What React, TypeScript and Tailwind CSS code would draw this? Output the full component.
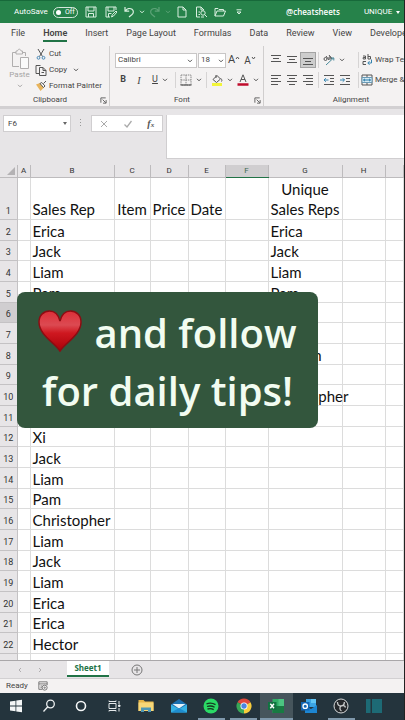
import { useState } from 'react';
import type { ReactNode } from 'react';

const menuTabs = ['File', 'Home', 'Insert', 'Page Layout', 'Formulas', 'Data', 'Review', 'View', 'Developer'];

const columns = [
  { name: 'A', width: 'w-[13px]' },
  { name: 'B', width: 'w-[84px]' },
  { name: 'C', width: 'w-9' },
  { name: 'D', width: 'w-[38px]' },
  { name: 'E', width: 'w-[37px]' },
  { name: 'F', width: 'w-[43px]' },
  { name: 'G', width: 'w-[74px]' },
  { name: 'H', width: 'w-[43px]' },
  { name: '', width: '' },
];

const salesReps = [
  'Erica', 'Jack', 'Liam', 'Pam', 'Hector', 'Erica', 'Morgan', 'Jack', 'Christopher', 'Pam', 'Xi',
  'Jack', 'Liam', 'Pam', 'Christopher', 'Liam', 'Jack', 'Liam', 'Erica', 'Erica', 'Hector', '',
];

const uniqueReps = ['Erica', 'Jack', 'Liam', 'Pam', 'Hector', 'Xi', 'Morgan', 'Tara', 'Christopher'];

function Chevron({ className = 'text-[#555]' }: { className?: string }) {
  return (
    <svg viewBox="0 0 6 4" className={`h-1 w-[6px] shrink-0 ${className}`} fill="none" stroke="currentColor">
      <path d="M1 .8 3 2.8 5 .8" />
    </svg>
  );
}

function Tool({ label, active, wide, children }: { label: string; active?: boolean; wide?: boolean; children: ReactNode }) {
  return (
    <button
      type="button"
      aria-label={label}
      className={`flex h-4 shrink-0 items-center justify-center ${wide ? 'w-[26px] gap-1' : 'w-4'} ${active ? 'border border-[#a3a3a3] bg-[#cdcdcd]' : ''}`}
    >
      {children}
    </button>
  );
}

function Divider() {
  return <span className="mx-[2px] h-4 w-px shrink-0 bg-[#d6d4d4]" />;
}

// text lines, given as [start, end, y]
function Lines({ rows }: { rows: number[][] }) {
  return (
    <svg viewBox="0 0 12 12" className="h-3 w-3" stroke="#555" strokeWidth="1">
      {rows.map(([x1, x2, y]) => (
        <path key={y} d={`M${x1} ${y}H${x2}`} />
      ))}
    </svg>
  );
}

function Launcher() {
  return (
    <svg viewBox="0 0 8 8" className="h-[7px] w-[7px]" fill="none" stroke="#555">
      <path d="M1 6.5V1h5.5M3 3l3.5 3.5M7 3.5V7H3.5" />
    </svg>
  );
}

function TitleBar() {
  const [autoSave, setAutoSave] = useState(false);
  return (
    <header className="flex h-[23px] shrink-0 items-center overflow-hidden border-t border-[#17693a] bg-[#26824a] pl-[14px] text-[8px] text-white">
      <label className="flex w-16 shrink-0 items-center justify-between">
        AutoSave
        <input type="checkbox" className="sr-only" checked={autoSave} onChange={(e) => setAutoSave(e.target.checked)} />
        <span className="flex h-[11px] w-[25px] items-center gap-1 rounded-full border border-white/80 pl-[2px] text-[7px] leading-none">
          <span className="h-[5px] w-[5px] rounded-full bg-white" />
          {autoSave ? 'On' : 'Off'}
        </span>
      </label>
      <button type="button" aria-label="Save" className="ml-[3px] flex w-5 shrink-0 justify-center">
        <svg viewBox="0 0 12 12" className="h-3 w-3" fill="none" stroke="#d9efe0">
          <path d="M1 1h10v10H1zM3 1v4h6V1M3.500 11V7.500h5V11" />
        </svg>
      </button>
      <button type="button" aria-label="Save as" className="flex w-5 shrink-0 justify-center">
        <svg viewBox="0 0 12 12" className="h-3 w-3" fill="none" stroke="#d9efe0">
          <path d="M5 11H1V1h10v3M3 1v4h6V1M3.500 11V7.500h3" />
          <path d="m6.500 11 .8-2.300L11 5l1 1-3.500 4z" />
        </svg>
      </button>
      <button type="button" aria-label="Undo" className="flex w-[26px] shrink-0 items-center justify-center gap-1">
        <svg viewBox="0 0 12 12" className="h-3 w-3" fill="none" stroke="#d9efe0" strokeWidth="1.200">
          <path d="M2 1v4.200h4.200M2.200 5C4 2.600 7 1.800 9 3.200c2 1.500 1.700 4-.2 5.500L6 11" />
        </svg>
        <Chevron className="text-[#d9efe0]" />
      </button>
      <button type="button" aria-label="Redo" className="flex w-[26px] shrink-0 items-center justify-center gap-1 opacity-30">
        <svg viewBox="0 0 12 12" className="h-3 w-3" fill="none" stroke="#d9efe0" strokeWidth="1.200">
          <path d="M10 1v4.200H5.800M9.800 5C8 2.600 5 1.800 3 3.200c-2 1.500-1.700 4 .2 5.500L6 11" />
        </svg>
        <Chevron className="text-[#d9efe0]" />
      </button>
      <button type="button" aria-label="New" className="flex w-[18px] shrink-0 justify-center">
        <svg viewBox="0 0 12 12" className="h-3 w-3" fill="none" stroke="#d9efe0">
          <path d="M2 1h5l3 3v7H2zM7 1v3h3" />
        </svg>
      </button>
      <button type="button" aria-label="Print preview" className="flex w-5 shrink-0 justify-center">
        <svg viewBox="0 0 12 12" className="h-3 w-3" fill="none" stroke="#d9efe0">
          <path d="M5 11H1.500V1H6l3 3M6 1v3h3M3.500 6H5M3.500 8.500H5" />
          <circle cx="8" cy="7" r="2.200" />
          <path d="M9.500 8.500 12 11M6 11h3" />
        </svg>
      </button>
      <button type="button" aria-label="Open" className="flex w-[18px] shrink-0 justify-center">
        <svg viewBox="0 0 12 12" className="h-3 w-3" fill="none" stroke="#d9efe0">
          <path d="M1 10V2.500h3l1 1h4.500V5M1 10l2-5h8.500l-2 5z" />
        </svg>
      </button>
      <button type="button" aria-label="Customize toolbar" className="flex w-5 shrink-0 justify-center">
        <svg viewBox="0 0 6 6" className="h-[6px] w-[6px]" fill="none" stroke="#d9efe0">
          <path d="M.5.8h5M1 3l2 2 2-2z" />
        </svg>
      </button>
      <span className="ml-[37px] shrink-0 font-['Open_Sans',sans-serif] font-semibold">@cheatsheets</span>
      <span className="ml-6 flex shrink-0 items-center gap-1">
        UNIQUE
        <svg viewBox="0 0 4 3" className="h-[3px] w-1" fill="white">
          <path d="M0 0h4L2 3z" />
        </svg>
      </span>
    </header>
  );
}

function Clipboard() {
  return (
    <section className="flex w-[110px] shrink-0 flex-col border-r border-[#d0cece]">
      <div className="flex h-[50px]">
        <button type="button" className="flex w-[35px] flex-col items-center pt-[2px] pl-1 text-[#a6a4a4]">
          <svg viewBox="0 0 20 22" className="h-[22px] w-5" fill="none" stroke="#b0aeae">
            <path d="M9 18.500H2.500v-14H6M12 4.500h3.500V8M6 6V3h1.500C8 .6 10.500.6 11 3h1.500v3z" />
            <path d="M10.500 9.500h8v11h-8z" fill="#fafafa" />
          </svg>
          <span className="leading-[10px]">Paste</span>
          <span className="pt-1"><Chevron className="text-[#a6a4a4]" /></span>
        </button>
        <div className="flex flex-col">
          <button type="button" className="flex h-4 items-center gap-[2px]">
            <svg viewBox="0 0 12 12" className="h-3 w-3" fill="none" stroke="#555">
              <path d="M3 1l4.500 7.500M9 1 4.500 8.500" />
              <g stroke="#4a8ab8"><circle cx="3.500" cy="9.800" r="1.400" /><circle cx="8.500" cy="9.800" r="1.400" /></g>
            </svg>
            Cut
          </button>
          <button type="button" className="flex h-4 items-center gap-[2px]">
            <svg viewBox="0 0 12 12" className="h-3 w-3" fill="none" stroke="#555">
              <path d="M4 9.500H1v-8h4.500" />
              <path d="M4.500 3.500H8l3 3v5H4.500zM8 3.500v3h3M6.500 8.500H9" />
            </svg>
            Copy
            <span className="ml-1"><Chevron /></span>
          </button>
          <button type="button" className="flex h-4 items-center gap-[2px] whitespace-nowrap">
            <svg viewBox="0 0 12 12" className="h-3 w-3">
              <path d="M1 4.500 5 3l4 4.500L5.500 11z" fill="#e8b45c" />
              <path d="M5 3.500 8.500 7.500 10 6 6.800 2.500zM8.500 3.500 11 1" fill="#fff" stroke="#555" />
            </svg>
            Format Painter
          </button>
        </div>
      </div>
      <div className="flex h-3 items-center pr-[2px]">
        <span className="flex-1 text-center">Clipboard</span>
        <Launcher />
      </div>
    </section>
  );
}

function FontGroup() {
  return (
    <section className="flex w-[154px] shrink-0 flex-col border-r border-[#d0cece]">
      <div className="flex h-[50px] flex-col gap-1 pt-[6px] pl-[5px]">
        <div className="flex items-center">
          <div className="relative">
            <select aria-label="Font" className="h-[15px] w-[82px] appearance-none border border-[#c8c6c6] bg-white pl-[2px] text-[8px] leading-none">
              <option>Calibri</option>
              <option>Arial</option>
            </select>
            <span className="pointer-events-none absolute top-[6px] right-1"><Chevron /></span>
          </div>
          <div className="relative ml-px">
            <select aria-label="Font size" className="h-[15px] w-7 appearance-none border border-[#c8c6c6] bg-white pl-[2px] text-[8px] leading-none">
              <option>18</option>
              <option>20</option>
            </select>
            <span className="pointer-events-none absolute top-[6px] right-[2px]"><Chevron /></span>
          </div>
          <Tool label="Increase font size">
            <span className="text-[11px]">A</span>
            <svg viewBox="0 0 5 8" className="h-2 w-[5px]" fill="none" stroke="#555"><path d="M1 3l1.500-2L4 3" /></svg>
          </Tool>
          <Tool label="Decrease font size">
            <span className="text-[10px]">A</span>
            <svg viewBox="0 0 5 8" className="h-2 w-[5px]" fill="none" stroke="#555"><path d="M1 1l1.500 2L4 1" /></svg>
          </Tool>
        </div>
        <div className="flex items-center">
          <Tool label="Bold"><b className="text-[9px]">B</b></Tool>
          <Tool label="Italic"><i className="font-['Liberation_Serif',serif] text-[10px]">I</i></Tool>
          <Tool label="Underline" wide><u className="text-[9px]">U</u><Chevron /></Tool>
          <Divider />
          <Tool label="Borders" wide>
            <svg viewBox="0 0 12 12" className="h-3 w-3" fill="none" stroke="#888">
              <path d="M1 1h10v10H1zM6 1v10M1 6h10" strokeDasharray="1.500 .8" />
              <path d="M.5 11h11" stroke="#444" />
            </svg>
            <Chevron />
          </Tool>
          <Divider />
          <Tool label="Fill color" wide>
            <svg viewBox="0 0 12 12" className="h-3 w-3" fill="none" stroke="#555">
              <path d="M2 5.500 6 1.500l3.500 3.500-4 3.500zM5 1v3M10 4.500c1.200 1.500 1 2.500.5 3" />
              <path d="M1 10.500h10" stroke="#f2f53a" strokeWidth="3" />
            </svg>
            <Chevron />
          </Tool>
          <Tool label="Font color" wide>
            <svg viewBox="0 0 12 12" className="h-3 w-3" fill="none" stroke="#555">
              <path d="M3 8 6 .8 9 8M4 5.500h4" />
              <path d="M.5 10.500h11" stroke="#c00c2c" strokeWidth="2.500" />
            </svg>
            <Chevron />
          </Tool>
        </div>
      </div>
      <div className="flex h-3 items-center pr-[2px]">
        <span className="flex-1 text-center">Font</span>
        <Launcher />
      </div>
    </section>
  );
}

function AlignmentGroup() {
  return (
    <section className="flex w-[174px] shrink-0 flex-col">
      <div className="flex h-[50px] flex-col gap-1 pt-[6px] pl-1">
        <div className="flex items-center">
          <Tool label="Top align"><Lines rows={[[1, 11, 1.5], [3, 9, 4.5], [1, 11, 7.5]]} /></Tool>
          <Tool label="Middle align"><Lines rows={[[1, 11, 2.5], [3, 9, 5.5], [1, 11, 8.5]]} /></Tool>
          <Tool label="Bottom align" active><Lines rows={[[1, 11, 4.5], [3, 9, 7.5], [1, 11, 10.5]]} /></Tool>
          <Divider />
          <Tool label="Orientation" wide>
            <svg viewBox="0 0 12 12" className="h-3 w-3" fill="none" stroke="#555">
              <circle cx="2.500" cy="5" r="1.500" /><path d="M3 2l3 4M6 1l3 4" /><circle cx="7" cy="4" r="1.200" />
              <path d="M3 11l7.500-7M8 4h2.800v2.500" stroke="#4a8a9a" />
            </svg>
            <Chevron />
          </Tool>
          <span className="ml-[9px] flex"><Divider /></span>
          <button type="button" className="flex items-center gap-[2px] whitespace-nowrap">
            <svg viewBox="0 0 12 12" className="h-3 w-3" fill="none" stroke="#555">
              <path d="M2 2h2.500v3H2.200V3.500h2.300M7 0v5h2.500V2.500H7M5 7.500H2v3h3" />
              <path d="M10.500 5.500v3.500H7M8.500 7.200 6.800 9l1.700 1.800" stroke="#3484b0" />
            </svg>
            Wrap Text
          </button>
        </div>
        <div className="flex items-center">
          <Tool label="Align left"><Lines rows={[[1, 11, 1.5], [1, 8, 4.5], [1, 11, 7.5], [1, 8, 10.5]]} /></Tool>
          <Tool label="Center"><Lines rows={[[1, 11, 1.5], [3, 9, 4.5], [1, 11, 7.5], [3, 9, 10.5]]} /></Tool>
          <Tool label="Align right"><Lines rows={[[1, 11, 1.5], [4, 11, 4.5], [1, 11, 7.5], [4, 11, 10.5]]} /></Tool>
          <Divider />
          <Tool label="Decrease indent">
            <svg viewBox="0 0 12 12" className="h-3 w-3" fill="none" stroke="#555">
              <path d="M1 1.500h10M7 4.500h4M7 7.500h4M1 10.500h10" /><path d="M5.500 6H1M2.800 4.200 1 6l1.800 1.800" stroke="#3484b0" />
            </svg>
          </Tool>
          <Tool label="Increase indent">
            <svg viewBox="0 0 12 12" className="h-3 w-3" fill="none" stroke="#555">
              <path d="M1 1.500h10M7 4.500h4M7 7.500h4M1 10.500h10" /><path d="M1 6h4.500M3.700 4.200 5.500 6 3.700 7.800" stroke="#3484b0" />
            </svg>
          </Tool>
          <span className="ml-[3px] flex"><Divider /></span>
          <button type="button" className="flex items-center gap-[2px] whitespace-nowrap">
            <svg viewBox="0 0 12 12" className="h-3 w-3" fill="none" stroke="#555">
              <path d="M1 1h10v10H1zM6 1v2M6 9v2" />
              <path d="M1 3.500h10v5H1z" fill="#d5ebf5" stroke="#6a9ab5" />
              <path d="M2.500 6h7M4 4.800 2.500 6 4 7.200M8 4.800 9.500 6 8 7.200" stroke="#2878a8" />
            </svg>
            Merge &amp; Center
          </button>
        </div>
      </div>
      <div className="flex h-3 items-center justify-center">Alignment</div>
    </section>
  );
}

function FormulaBar() {
  return (
    <div className="flex h-14 shrink-0 items-start bg-[#e7e5e7] pt-[6px] pl-[3px]">
      <div className="relative">
        <input aria-label="Name box" defaultValue="F6" className="h-[17px] w-[68px] border border-[#d0ced0] bg-white pl-1 text-[8px] text-[#444]" />
        <svg viewBox="0 0 4 3" className="pointer-events-none absolute top-[7px] right-1 h-[3px] w-1" fill="#666"><path d="M0 0h4L2 3z" /></svg>
      </div>
      <svg viewBox="0 0 2 8" className="mx-[9px] mt-1 h-2 w-[2px]" fill="#999"><path d="M0 0h1v1H0zM0 3h1v1H0zM0 6h1v1H0z" /></svg>
      <div className="flex h-[17px] w-[72px] shrink-0 items-center justify-around border border-[#d0ced0] bg-white">
        <button type="button" aria-label="Cancel">
          <svg viewBox="0 0 8 8" className="h-2 w-2" stroke="#aaa"><path d="M1 1l6 6M7 1 1 7" /></svg>
        </button>
        <button type="button" aria-label="Enter">
          <svg viewBox="0 0 8 8" className="h-2 w-2" fill="none" stroke="#aaa" strokeWidth="1.300"><path d="M.5 4.500 3 7l4.500-6" /></svg>
        </button>
        <button type="button" aria-label="Insert function" className="font-['Liberation_Serif',serif] text-[10px] leading-none font-bold text-[#555] italic">
          f<span className="text-[7px]">x</span>
        </button>
      </div>
      <textarea aria-label="Formula" className="ml-[3px] h-11 min-w-0 flex-1 resize-none border-b border-l border-[#d0ced0] bg-white" />
    </div>
  );
}

function RowNumber({ n }: { n: number }) {
  return (
    <th className={`border border-l-0 border-[#c4c2c4] p-0 text-center align-bottom font-['Roboto',sans-serif] text-[9px] leading-[15px] font-normal text-[#333] ${n === 6 ? 'bg-[#d0ced0]' : 'bg-[#e7e5e7]'}`}>
      {n}
    </th>
  );
}

function Sheet() {
  return (
    <table className="w-full table-fixed border-collapse font-['Lato','Open_Sans',sans-serif] text-[15px] leading-4 text-[#111]">
      <thead>
        <tr className="h-3 bg-[#e7e5e7] font-['Roboto',sans-serif] text-[8px] leading-[11px] text-[#333]">
          <th className="w-[17px] border-r border-b border-[#bdbbbd] p-0">
            <svg viewBox="0 0 8 8" className="ml-[7px] h-2 w-2" fill="#b4b2b4"><path d="M8 0v8H0z" /></svg>
          </th>
          {columns.map((col) => (
            <th
              key={col.name}
              className={`border-r border-b p-0 font-normal ${col.width} ${col.name === 'F' ? 'border-r-[#bdbbbd] border-b-[#217346] bg-[#d0ced0] text-[#3f6b52]' : 'border-[#bdbbbd]'}`}
            >
              {col.name}
            </th>
          ))}
        </tr>
      </thead>
      <tbody>
        <tr className="h-[42px] align-bottom leading-5">
          <RowNumber n={1} />
          <td className="border border-t-0 border-[#dcdcdc]" />
          <td className="border border-t-0 border-[#dcdcdc] p-0 pl-[2px]">Sales Rep</td>
          <td className="border border-t-0 border-[#dcdcdc] p-0 text-center">Item</td>
          <td className="border border-t-0 border-[#dcdcdc] p-0 text-center">Price</td>
          <td className="border border-t-0 border-[#dcdcdc] p-0 pl-[2px]">Date</td>
          <td className="border border-t-0 border-[#dcdcdc]" />
          <td className="border border-t-0 border-[#dcdcdc] p-0 text-center whitespace-nowrap">Unique<br />Sales Reps</td>
          <td className="border border-t-0 border-[#dcdcdc]" />
          <td className="border border-t-0 border-[#dcdcdc]" />
        </tr>
        {salesReps.map((rep, i) => (
          <tr key={i} className={i % 3 === 1 ? 'h-5' : 'h-[21px]'}>
            <RowNumber n={i + 2} />
            {columns.map((col) => (
              <td key={col.name} className="border border-[#dcdcdc] p-0 pt-[2px] pl-[2px] whitespace-nowrap">
                {col.name === 'B' && rep}
                {col.name === 'G' && uniqueReps[i]}
              </td>
            ))}
          </tr>
        ))}
      </tbody>
    </table>
  );
}

function Banner() {
  return (
    <div className="absolute top-[127px] left-[17px] w-[301px] rounded-lg bg-[#33563d] pt-3 pb-2 text-center font-['Open_Sans',sans-serif] text-[40px] leading-[58px] font-semibold whitespace-nowrap text-[#f2fcf1]">
      <p className="flex items-center justify-center gap-3">
        <svg viewBox="0 0 44 42" className="mb-1 h-[42px] w-11" aria-label="heart">
          <defs>
            <linearGradient id="heart" x1="0" y1="0" x2="0" y2="1">
              <stop offset="0" stopColor="#dd2f38" />
              <stop offset="0.350" stopColor="#dc4a52" />
              <stop offset="0.550" stopColor="#cf1820" />
              <stop offset="1" stopColor="#a80008" />
            </linearGradient>
          </defs>
          <path
            d="M22 41C17 33 1 25 1 12 1 5 6 1 11.500 1 17 1 20.500 5 22 11 23.500 5 27 1 32.500 1 38 1 43 5 43 12 43 25 27 33 22 41z"
            fill="url(#heart)"
            stroke="#8d0c12"
            strokeWidth="1.500"
          />
        </svg>
        and follow
      </p>
      <p>for daily tips!</p>
    </div>
  );
}

const taskbarApps: { name: string; open?: boolean; active?: boolean; icon: ReactNode }[] = [
  {
    name: 'Start',
    icon: <path d="M2 3.500 7.500 2.700V7.600H2zM8.300 2.600 14 1.800v5.800H8.300zM2 8.400h5.500v4.900L2 12.500zM8.300 8.400H14v5.800l-5.700-.8z" fill="#f4f6f7" />,
  },
  {
    name: 'Search',
    icon: <g fill="none" stroke="#eef1f2" strokeWidth="1.300"><circle cx="9.500" cy="6" r="3.800" /><path d="M6.800 8.800 2.500 13.500" /></g>,
  },
  { name: 'Cortana', icon: <circle cx="8" cy="8" r="4.500" fill="none" stroke="#f4f6f7" strokeWidth="1.600" /> },
  {
    name: 'Task view',
    icon: <g fill="none" stroke="#e3e7e9"><path d="M3 5.500h7v5H3zM3 2.500v1h7v-1M3 13.500v-1h7v1M13 3v3M13 10v3.500" /><path d="M12.500 7h1.500v1.500h-1.500z" fill="#fff" /></g>,
  },
  {
    name: 'File Explorer',
    icon: <><path d="M.5 2h5l1.500 1.500h8.500V13H.5z" fill="#e5b548" /><path d="M.5 4.500h15V13H.5z" fill="#f6d778" /><path d="M3 14V9.500h10V14h-3v-2H6v2z" fill="#4d97b5" /></>,
  },
  {
    name: 'Mail',
    icon: <><path d="M0 6.500 8 1l8 5.500V14H0z" fill="#1b6fae" /><path d="M1.500 6h13L8 10.500z" fill="#e7f3f9" /><path d="M0 6.500 8 11l8-4.500V14.500H0z" fill="#35b1e3" /><path d="M0 14.500 8 10l8 4.500z" fill="#1e8dd0" /></>,
  },
  {
    name: 'Spotify',
    open: true,
    icon: <><circle cx="8" cy="8" r="7.500" fill="#2bd965" /><path d="M3.500 5.800c3-1 6.500-.7 9 .8M4 8.500c2.600-.8 5.500-.5 7.600.7M4.500 11c2.200-.6 4.500-.4 6.200.6" fill="none" stroke="#14381f" strokeWidth="1.300" /></>,
  },
  {
    name: 'Chrome',
    open: true,
    icon: (
      <>
        <path d="M8 8 1.500 4.200A7.500 7.500 0 0 1 14.500 4.200z" fill="#e04a3c" />
        <path d="M8 8 1.500 4.200A7.500 7.500 0 0 0 8 15.500z" fill="#38a757" />
        <path d="M8 8l6.500-3.800A7.500 7.500 0 0 1 8 15.500z" fill="#f7cc3c" />
        <circle cx="8" cy="8" r="3.500" fill="#fff" /><circle cx="8" cy="8" r="2.700" fill="#4a86e0" />
      </>
    ),
  },
  {
    name: 'Excel',
    open: true,
    active: true,
    icon: <><path d="M4.500 1H16v14H4.500z" fill="#2fae66" /><path d="M4.500 8H16v7H4.500z" fill="#187a42" /><path d="M10.500 1H16v7h-5.500z" fill="#4cc481" /><path d="M0 4h8.500v8H0z" fill="#117340" /><path d="m2.300 5.800 3.700 4.400M6 5.800l-3.700 4.400" stroke="#fff" strokeWidth="1.400" /></>,
  },
  {
    name: 'Outlook',
    icon: <><path d="M5 1h10v8H5z" fill="#3ba4e4" /><path d="M10 1h5v4h-5z" fill="#62c6f5" /><path d="M4 8l6 3 6-4v8H4z" fill="#1d86d2" /><path d="M0 4h8.500v8.500H0z" fill="#1266b4" /><circle cx="4.200" cy="8.200" r="2.200" fill="none" stroke="#fff" strokeWidth="1.300" /></>,
  },
  {
    name: 'OBS',
    open: true,
    icon: <><circle cx="8" cy="8" r="7" fill="#25282b" stroke="#d8dadb" /><path d="M4.500 4C4.500 6.500 6 8 8 8c2-.2 3.500-1.500 3.300-4M8 8c-1.500 1.200-1.500 4 .5 5M8 8c1.500-1 4-.2 4.500 1.500" fill="none" stroke="#c9cccd" strokeWidth="1.300" /></>,
  },
  { name: 'Notes', icon: <path d="M0 1h4.500v14H0zM6 1h10v14H6z" fill="#1d6a75" /> },
];

function Taskbar() {
  return (
    <nav className="flex h-[27px] shrink-0 bg-[#24343d] pr-[14px]">
      {taskbarApps.map((app) => (
        <button
          key={app.name}
          type="button"
          aria-label={app.name}
          className={`flex flex-1 flex-col items-center justify-between pt-[5px] ${app.active ? 'bg-[#46555c]' : ''}`}
        >
          <svg viewBox="0 0 16 16" className="h-4 w-4">{app.icon}</svg>
          <span className={`h-[2px] ${app.active ? 'w-full' : 'w-[27px]'} ${app.open ? 'bg-[#7f98ab]' : ''}`} />
        </button>
      ))}
    </nav>
  );
}

export default function App() {
  const [tab, setTab] = useState('Home');

  return (
    <div className="flex h-screen flex-col overflow-hidden border-r border-[#222] bg-[#f4f2f2] font-['Roboto',sans-serif] text-[8px] text-[#444]">
      <TitleBar />
      <nav className="flex h-[23px] shrink-0 items-end gap-[18px] overflow-hidden pb-1 pl-[11px] text-[9px]">
        {menuTabs.map((name) => (
          <button
            key={name}
            type="button"
            onClick={() => setTab(name)}
            className={`h-4 shrink-0 border-b-2 leading-[14px] ${tab === name ? 'border-[#217346] font-semibold' : 'border-transparent'}`}
          >
            {name}
          </button>
        ))}
      </nav>
      <div className="flex h-[60px] shrink-0 overflow-hidden">
        <Clipboard />
        <FontGroup />
        <AlignmentGroup />
      </div>
      <div className="h-[3px] shrink-0 bg-[#d2d0d2]" />
      <FormulaBar />
      <main className="relative min-h-0 flex-1">
        <div className="h-full overflow-hidden bg-white">
          <Sheet />
        </div>
        <Banner />
      </main>
      <div className="flex h-[18px] shrink-0 items-start border-t border-[#a9a7a9] bg-[#e7e5e7]">
        <div className="flex w-[67px] items-center justify-center gap-4 pt-[6px] pr-2">
          <svg viewBox="0 0 4 6" className="h-[6px] w-1" fill="none" stroke="#b0aeb0"><path d="M3 1 1 3l2 2" /></svg>
          <svg viewBox="0 0 4 6" className="h-[6px] w-1" fill="none" stroke="#b0aeb0"><path d="m1 1 2 2-2 2" /></svg>
        </div>
        <button type="button" className="h-4 w-[42px] border-b-2 border-[#217346] bg-white font-['Open_Sans',sans-serif] font-bold text-[#217346]">Sheet1</button>
        <button type="button" aria-label="New sheet" className="ml-[22px] pt-[3px]">
          <svg viewBox="0 0 12 12" className="h-3 w-3" fill="none" stroke="#777"><circle cx="6" cy="6" r="5" /><path d="M6 3v6M3 6h6" /></svg>
        </button>
      </div>
      <footer className="flex h-[15px] shrink-0 items-center gap-[10px] border-t border-[#d2d0d2] pl-[6px]">
        Ready
        <svg viewBox="0 0 12 12" className="h-[10px] w-[10px]" fill="none" stroke="#666">
          <path d="M5 10H1V1h10v4M1 3.500h10M3 6h2M3 8h1.500" /><circle cx="8" cy="8" r="3" /><circle cx="8" cy="8" r=".8" />
        </svg>
      </footer>
      <Taskbar />
    </div>
  );
}
